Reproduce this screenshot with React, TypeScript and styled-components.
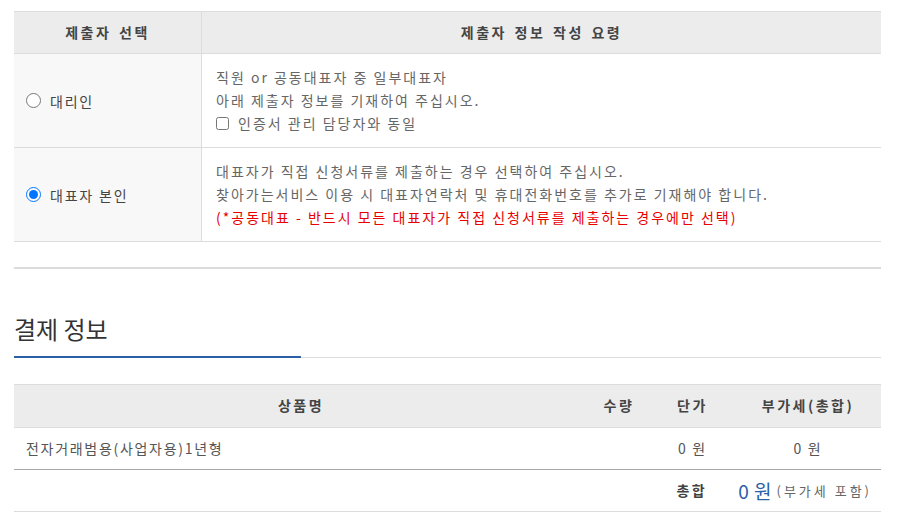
import React from "react";
import styled, { createGlobalStyle } from "styled-components";

const GlobalStyle = createGlobalStyle`
  *, *::before, *::after { box-sizing: border-box; }
  html, body { margin: 0; padding: 0; background: #fff; }
  body {
    font-family: "Noto Sans CJK KR", "Noto Sans", sans-serif;
    color: #444;
  }
`;

const Page = styled.div`
  padding: 11px 17px 0 14px;
`;

/* ---------- submitter table ---------- */

const SubmitterTable = styled.div`
  display: flex;
  flex-direction: column;
`;

const SubmitterRow = styled.div<{ $head?: boolean }>`
  display: grid;
  grid-template-columns: 188px 1fr;
  border-top: ${(p) => (p.$head ? "1px solid #dcdcdc" : "none")};
  border-bottom: 1px solid #dcdcdc;
  height: ${(p) => (p.$head ? "43px" : "auto")};
`;

const HeadCell = styled.div<{ $divider?: boolean }>`
  display: flex;
  align-items: center;
  justify-content: center;
  padding-bottom: 2px;
  background: #ececec;
  border-right: ${(p) => (p.$divider ? "1px solid #dcdcdc" : "none")};
  font-size: 14px;
  font-weight: 700;
  color: #444;
  letter-spacing: 2.5px;
  word-spacing: 2px;
`;

const ChoiceCell = styled.label`
  display: flex;
  align-items: center;
  gap: 9px;
  padding-left: 12px;
  background: #f8f8f8;
  border-right: 1px solid #dcdcdc;
  font-size: 14px;
  color: #444;
  letter-spacing: 1.8px;
  cursor: pointer;
`;

const Radio = styled.input.attrs({ type: "radio" })`
  width: 15px;
  height: 15px;
  margin: 0;
`;

const GuideCell = styled.div`
  padding: 12px 14px;
  font-size: 14px;
  line-height: 23px;
  color: #666;
  letter-spacing: 2px;
`;

const GuideLine = styled.div<{ $warn?: boolean }>`
  display: flex;
  align-items: center;
  white-space: nowrap;
  color: ${(p) => (p.$warn ? "#e80000" : "inherit")};
`;

const CheckLabel = styled.label`
  display: flex;
  align-items: center;
  gap: 9px;
  cursor: pointer;
`;

const Check = styled.input.attrs({ type: "checkbox" })`
  width: 13px;
  height: 13px;
  margin: 0;
`;

const Divider = styled.hr`
  margin: 25px 0 0;
  border: none;
  height: 2px;
  background: #dcdcdc;
`;

/* ---------- payment section ---------- */

const SectionHead = styled.div`
  margin-top: 43px;
  border-bottom: 1px solid #dcdcdc;
`;

const SectionTitle = styled.h2`
  width: 287px;
  margin: 0 0 -1px;
  padding-bottom: 10px;
  border-bottom: 2px solid #2b5fa6;
  font-size: 24px;
  line-height: 34px;
  font-weight: 400;
  color: #333;
`;

const PayTable = styled.div`
  margin-top: 26px;
  display: flex;
  flex-direction: column;
`;

const PayRow = styled.div<{ $head?: boolean; $strong?: boolean }>`
  display: grid;
  grid-template-columns: 574px 62px 85px 1fr;
  height: ${(p) => (p.$head ? "44px" : "42px")};
  border-top: ${(p) => (p.$head ? "1px solid #dcdcdc" : "none")};
  border-bottom: 1px solid ${(p) => (p.$strong ? "#a8a8a8" : "#dcdcdc")};
  background: ${(p) => (p.$head ? "#ececec" : "#fff")};
`;

const PayHead = styled.div`
  display: flex;
  align-items: center;
  justify-content: center;
  padding-bottom: 2px;
  font-size: 14px;
  font-weight: 700;
  color: #444;
  letter-spacing: 2.5px;
`;

const PayCell = styled.div<{ $align?: "left" | "center" }>`
  display: flex;
  align-items: center;
  justify-content: ${(p) => (p.$align === "left" ? "flex-start" : "center")};
  padding-left: ${(p) => (p.$align === "left" ? "12px" : "0")};
  padding-bottom: 1px;
  font-size: 14px;
  color: #555;
  letter-spacing: 1.7px;
`;

const TotalRow = styled.div`
  display: flex;
  align-items: center;
  justify-content: flex-end;
  height: 42px;
  padding-right: 12px;
  padding-bottom: 1px;
  border-bottom: 1px solid #dcdcdc;
`;

const TotalLabel = styled.span`
  font-size: 14px;
  font-weight: 700;
  color: #444;
  letter-spacing: 2.5px;
  margin-right: 31px;
`;

const TotalAmount = styled.span`
  font-size: 19px;
  color: #2b5fa6;
  margin-right: 5px;
  word-spacing: 1px;
`;

const TotalNote = styled.span`
  font-size: 13px;
  color: #666;
  letter-spacing: 3px;
  margin-right: -3px;
`;

export default function App() {
  return (
    <>
      <GlobalStyle />
      <Page>
        <SubmitterTable>
          <SubmitterRow $head>
            <HeadCell $divider>제출자 선택</HeadCell>
            <HeadCell>제출자 정보 작성 요령</HeadCell>
          </SubmitterRow>
          <SubmitterRow>
            <ChoiceCell>
              <Radio name="submitter" value="agent" />
              대리인
            </ChoiceCell>
            <GuideCell>
              <GuideLine>직원 or 공동대표자 중 일부대표자</GuideLine>
              <GuideLine>아래 제출자 정보를 기재하여 주십시오.</GuideLine>
              <GuideLine>
                <CheckLabel>
                  <Check />
                  인증서 관리 담당자와 동일
                </CheckLabel>
              </GuideLine>
            </GuideCell>
          </SubmitterRow>
          <SubmitterRow>
            <ChoiceCell>
              <Radio name="submitter" value="ceo" defaultChecked />
              대표자 본인
            </ChoiceCell>
            <GuideCell>
              <GuideLine>대표자가 직접 신청서류를 제출하는 경우 선택하여 주십시오.</GuideLine>
              <GuideLine>
                찾아가는서비스 이용 시 대표자연락처 및 휴대전화번호를 추가로 기재해야 합니다.
              </GuideLine>
              <GuideLine $warn>
                (*공동대표 - 반드시 모든 대표자가 직접 신청서류를 제출하는 경우에만 선택)
              </GuideLine>
            </GuideCell>
          </SubmitterRow>
        </SubmitterTable>

        <Divider />

        <SectionHead>
          <SectionTitle>결제 정보</SectionTitle>
        </SectionHead>

        <PayTable>
          <PayRow $head>
            <PayHead>상품명</PayHead>
            <PayHead>수량</PayHead>
            <PayHead>단가</PayHead>
            <PayHead>부가세(총합)</PayHead>
          </PayRow>
          <PayRow $strong>
            <PayCell $align="left">전자거래범용(사업자용)1년형</PayCell>
            <PayCell></PayCell>
            <PayCell>0 원</PayCell>
            <PayCell>0 원</PayCell>
          </PayRow>
          <TotalRow>
            <TotalLabel>총합</TotalLabel>
            <TotalAmount>0 원</TotalAmount>
            <TotalNote>(부가세 포함)</TotalNote>
          </TotalRow>
        </PayTable>
      </Page>
    </>
  );
}
